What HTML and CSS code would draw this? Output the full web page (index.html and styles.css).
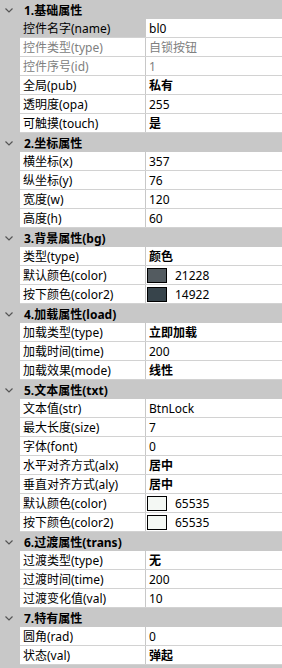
FILE: index.html
```html
<!DOCTYPE html>
<html lang="zh-CN">
<head>
  <meta charset="UTF-8">
  <meta name="viewport" content="width=device-width, initial-scale=1.0">
  <title>属性</title>
  <link rel="stylesheet" href="styles.css">
</head>
<body>
  <div class="panel">
    <div class="group-head"><span class="chev"><svg width="8" height="5" viewBox="0 0 8 5"><path d="M0.5 0.5 L4 4 L7.5 0.5" fill="none" stroke="#555" stroke-width="1.2"/></svg></span><span class="title">1.基础属性</span></div>
    <div class="row selected"><div class="key">控件名字(name)</div><div class="val">bl0</div></div>
    <div class="row disabled"><div class="key">控件类型(type)</div><div class="val">自锁按钮</div></div>
    <div class="row disabled"><div class="key">控件序号(id)</div><div class="val">1</div></div>
    <div class="row"><div class="key">全局(pub)</div><div class="val bold">私有</div></div>
    <div class="row"><div class="key">透明度(opa)</div><div class="val">255</div></div>
    <div class="row"><div class="key">可触摸(touch)</div><div class="val bold">是</div></div>

    <div class="group-head"><span class="chev"><svg width="8" height="5" viewBox="0 0 8 5"><path d="M0.5 0.5 L4 4 L7.5 0.5" fill="none" stroke="#555" stroke-width="1.2"/></svg></span><span class="title">2.坐标属性</span></div>
    <div class="row"><div class="key">横坐标(x)</div><div class="val">357</div></div>
    <div class="row"><div class="key">纵坐标(y)</div><div class="val">76</div></div>
    <div class="row"><div class="key">宽度(w)</div><div class="val">120</div></div>
    <div class="row"><div class="key">高度(h)</div><div class="val">60</div></div>

    <div class="group-head"><span class="chev"><svg width="8" height="5" viewBox="0 0 8 5"><path d="M0.5 0.5 L4 4 L7.5 0.5" fill="none" stroke="#555" stroke-width="1.2"/></svg></span><span class="title">3.背景属性(bg)</span></div>
    <div class="row"><div class="key">类型(type)</div><div class="val bold">颜色</div></div>
    <div class="row"><div class="key">默认颜色(color)</div><div class="val"><span class="swatch dark1"></span>21228</div></div>
    <div class="row"><div class="key">按下颜色(color2)</div><div class="val"><span class="swatch dark2"></span>14922</div></div>

    <div class="group-head"><span class="chev"><svg width="8" height="5" viewBox="0 0 8 5"><path d="M0.5 0.5 L4 4 L7.5 0.5" fill="none" stroke="#555" stroke-width="1.2"/></svg></span><span class="title">4.加载属性(load)</span></div>
    <div class="row"><div class="key">加载类型(type)</div><div class="val bold">立即加载</div></div>
    <div class="row"><div class="key">加载时间(time)</div><div class="val">200</div></div>
    <div class="row"><div class="key">加载效果(mode)</div><div class="val bold">线性</div></div>

    <div class="group-head"><span class="chev"><svg width="8" height="5" viewBox="0 0 8 5"><path d="M0.5 0.5 L4 4 L7.5 0.5" fill="none" stroke="#555" stroke-width="1.2"/></svg></span><span class="title">5.文本属性(txt)</span></div>
    <div class="row"><div class="key">文本值(str)</div><div class="val">BtnLock</div></div>
    <div class="row"><div class="key">最大长度(size)</div><div class="val">7</div></div>
    <div class="row"><div class="key">字体(font)</div><div class="val">0</div></div>
    <div class="row"><div class="key">水平对齐方式(alx)</div><div class="val bold">居中</div></div>
    <div class="row"><div class="key">垂直对齐方式(aly)</div><div class="val bold">居中</div></div>
    <div class="row"><div class="key">默认颜色(color)</div><div class="val"><span class="swatch light"></span>65535</div></div>
    <div class="row"><div class="key">按下颜色(color2)</div><div class="val"><span class="swatch light"></span>65535</div></div>

    <div class="group-head"><span class="chev"><svg width="8" height="5" viewBox="0 0 8 5"><path d="M0.5 0.5 L4 4 L7.5 0.5" fill="none" stroke="#555" stroke-width="1.2"/></svg></span><span class="title">6.过渡属性(trans)</span></div>
    <div class="row"><div class="key">过渡类型(type)</div><div class="val bold">无</div></div>
    <div class="row"><div class="key">过渡时间(time)</div><div class="val">200</div></div>
    <div class="row"><div class="key">过渡变化值(val)</div><div class="val">10</div></div>

    <div class="group-head"><span class="chev"><svg width="8" height="5" viewBox="0 0 8 5"><path d="M0.5 0.5 L4 4 L7.5 0.5" fill="none" stroke="#555" stroke-width="1.2"/></svg></span><span class="title">7.特有属性</span></div>
    <div class="row"><div class="key">圆角(rad)</div><div class="val">0</div></div>
    <div class="row"><div class="key">状态(val)</div><div class="val bold">弹起</div></div>
  </div>
</body>
</html>
```

FILE: styles.css
```css
html, body {
  margin: 0;
  padding: 0;
}

body {
  font-family: "Noto Sans", "Noto Sans CJK SC", sans-serif;
  font-size: 12px;
  color: #000;
  background: #c8c8c8;
  height: 668px;
  overflow: hidden;
}

.panel {
  background: #c8c8c8;
}

.group-head {
  display: flex;
  align-items: center;
  height: 19px;
  background: #c8c8c8;
}

.chev {
  width: 20px;
  display: flex;
  justify-content: center;
  padding-top: 2px;
  margin-right: 4px;
}

.chev svg {
  display: block;
  margin-left: -3px;
}

.title {
  font-weight: bold;
  line-height: 19px;
  padding-top: 1px;
}

.row {
  display: flex;
  height: 19px;
  margin-left: 20px;
  background: #fff;
  border-bottom: 1px solid #d2d2d2;
  box-sizing: border-box;
}

.key {
  width: 126px;
  padding-left: 3px;
  border-right: 1px solid #c8c8c8;
  box-sizing: border-box;
  line-height: 18px;
  padding-top: 1px;
  white-space: nowrap;
  overflow: hidden;
}

.val {
  flex: 1;
  display: flex;
  align-items: center;
  padding-left: 3px;
  padding-top: 1px;
  line-height: 18px;
  white-space: nowrap;
}

.bold {
  font-weight: bold;
}

.selected .key {
  background: #c8c8c8;
}

.disabled .key,
.disabled .val {
  color: #808080;
}

.swatch {
  width: 18px;
  height: 13px;
  border: 1px solid #000;
  margin-left: -2px;
  margin-right: 8px;
  margin-top: -1px;
}

.dark1 {
  background: #535b60;
}

.dark2 {
  background: #37444b;
}

.light {
  background: #f4f8f4;
}
```
